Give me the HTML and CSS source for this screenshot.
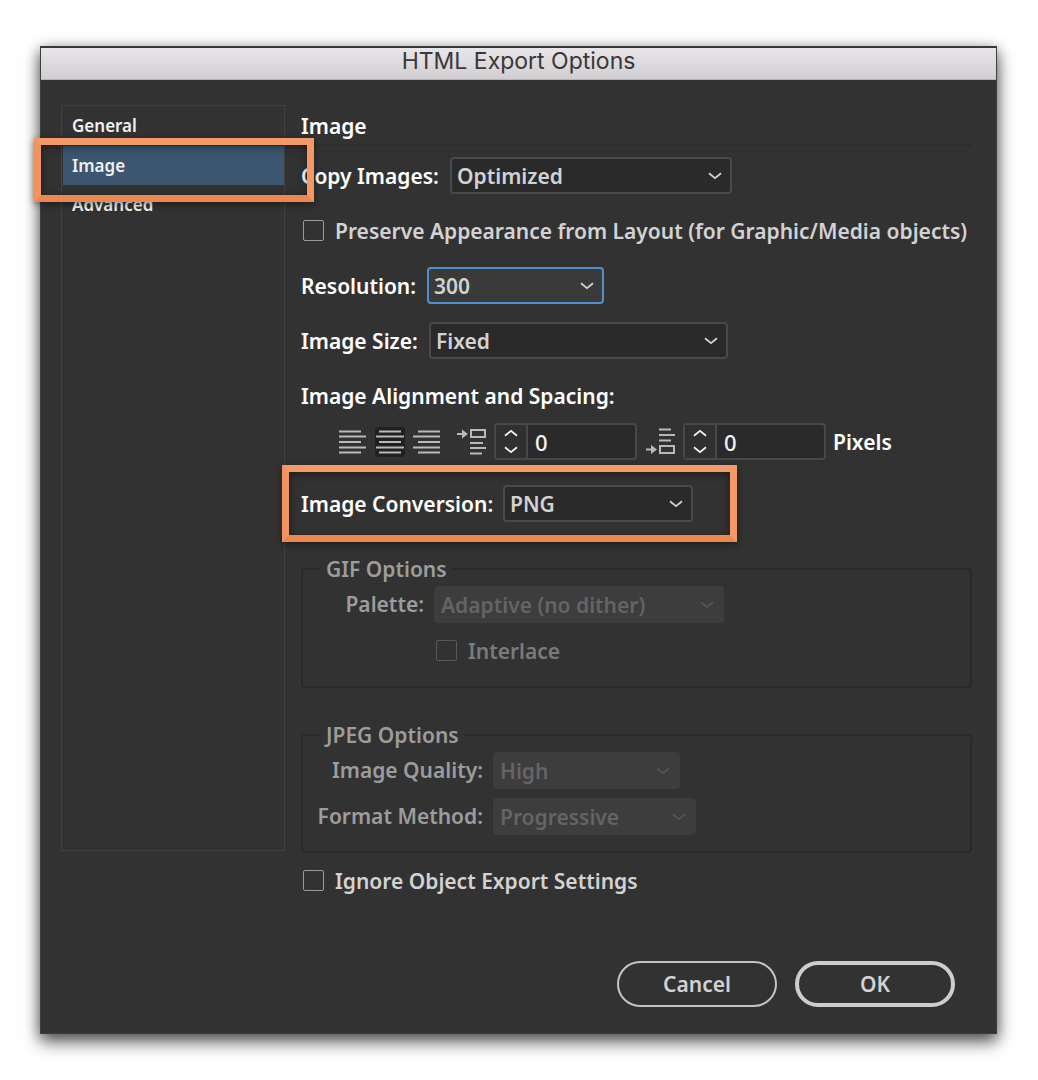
FILE: index.html
```html
<!DOCTYPE html>
<html lang="en">
<head>
<meta charset="utf-8">
<title>HTML Export Options</title>
<link rel="stylesheet" href="styles.css">
</head>
<body>
<svg class="defs" aria-hidden="true">
  <symbol id="chevron" viewBox="0 0 14 8"><path d="M1 1.2 7 6.2 13 1.2" fill="none" stroke="currentColor" stroke-width="1.8"/></symbol>
</svg>
<main class="dialog">
  <header class="titlebar"><h1 class="title">HTML Export Options</h1></header>
  <form class="content">
    <div class="panels">
      <nav class="sidebar">
        <button type="button" class="tab">General</button>
        <button type="button" class="tab tab-active">Image<span class="callout callout-tab"></span></button>
        <button type="button" class="tab">Advanced</button>
      </nav>
      <section class="settings">
        <h2 class="heading">Image</h2>
        <div class="row">
          <label class="label label-copy" for="copy">Copy Images:</label>
          <span class="dropdown w-copy"><select id="copy"><option>Optimized</option></select><svg class="chevron"><use href="#chevron"/></svg></span>
        </div>
        <div class="row check-row">
          <input type="checkbox" id="preserve"><label for="preserve">Preserve Appearance from Layout (for Graphic/Media objects)</label>
        </div>
        <div class="row">
          <label class="label label-res" for="resolution">Resolution:</label>
          <span class="dropdown w-res focused"><select id="resolution"><option>300</option></select><svg class="chevron"><use href="#chevron"/></svg></span>
        </div>
        <div class="row">
          <label class="label label-size" for="size">Image Size:</label>
          <span class="dropdown w-size"><select id="size"><option>Fixed</option></select><svg class="chevron"><use href="#chevron"/></svg></span>
        </div>
        <div class="row label">Image Alignment and Spacing:</div>
        <div class="row align-row">
          <div class="align-group">
            <button type="button" class="align" aria-label="Align left"><svg width="28" height="24"><path d="M0 1.5H22M0 6.5H27M0 12H22M0 17.500H27M0 22.500H22"/></svg></button>
            <button type="button" class="align align-active" aria-label="Align center"><svg width="28" height="24"><path d="M3 1.5H25M0 6.5H28M3 12H25M0 17.500H28M3 22.500H25"/></svg></button>
            <button type="button" class="align" aria-label="Align right"><svg width="28" height="24"><path d="M5 1.5H27M0 6.5H27M5 12H27M0 17.500H27M5 22.500H27"/></svg></button>
          </div>
          <svg class="space-icon" width="30" height="27"><path d="M0 6H8M14 2H28V9H14ZM13 15H26M13 20H29M13 25.500H25"/><path class="solid" d="M5 1.500 11 6 5 10.500Z"/></svg>
          <div class="stepper">
            <div class="arrows">
              <button type="button" aria-label="Increase space before"><svg class="flip"><use href="#chevron"/></svg></button>
              <button type="button" aria-label="Decrease space before"><svg><use href="#chevron"/></svg></button>
            </div>
            <input type="text" value="0" aria-label="Space before">
          </div>
          <svg class="space-icon" width="30" height="27"><path d="M13 1.500H25M13 7H29M13 12.500H25M14 18H28V25H14ZM0 21.500H8"/><path class="solid" d="M5 17 11 21.500 5 26Z"/></svg>
          <div class="stepper">
            <div class="arrows">
              <button type="button" aria-label="Increase space after"><svg class="flip"><use href="#chevron"/></svg></button>
              <button type="button" aria-label="Decrease space after"><svg><use href="#chevron"/></svg></button>
            </div>
            <input type="text" value="0" aria-label="Space after">
          </div>
          <span class="label units">Pixels</span>
        </div>
        <div class="row conversion">
          <label class="label label-conv" for="conversion">Image Conversion:</label>
          <span class="dropdown w-conv"><select id="conversion"><option>PNG</option></select><svg class="chevron"><use href="#chevron"/></svg></span>
          <span class="callout callout-conversion"></span>
        </div>
        <fieldset class="group gif" disabled>
          <legend>GIF Options</legend>
          <div class="group-grid">
            <label for="palette">Palette:</label>
            <span class="dropdown w-palette"><select id="palette"><option>Adaptive (no dither)</option></select><svg class="chevron"><use href="#chevron"/></svg></span>
            <div class="check-row interlace"><input type="checkbox" id="interlace"><label for="interlace">Interlace</label></div>
          </div>
        </fieldset>
        <fieldset class="group jpeg" disabled>
          <legend>JPEG Options</legend>
          <div class="group-grid">
            <label for="quality">Image Quality:</label>
            <span class="dropdown w-quality"><select id="quality"><option>High</option></select><svg class="chevron"><use href="#chevron"/></svg></span>
            <label for="method">Format Method:</label>
            <span class="dropdown w-method"><select id="method"><option>Progressive</option></select><svg class="chevron"><use href="#chevron"/></svg></span>
          </div>
        </fieldset>
        <div class="row check-row ignore">
          <input type="checkbox" id="ignore"><label for="ignore">Ignore Object Export Settings</label>
        </div>
      </section>
    </div>
    <footer class="actions">
      <button type="button" class="pill">Cancel</button>
      <button type="submit" class="pill pill-primary">OK</button>
    </footer>
  </form>
</main>
</body>
</html>
```
FILE: styles.css
```css
*, *::before, *::after { box-sizing: border-box; }

body {
  margin: 0;
  padding: 46px 41px 46px 40px;
  background: #fff;
  color: #d2d2d2;
  font: 600 21px/28px "Noto Sans", "Open Sans", sans-serif;
}

button, input, select { font: inherit; color: inherit; margin: 0; }
h1, h2 { margin: 0; font-weight: inherit; }
.defs { position: absolute; width: 0; height: 0; }

.dialog {
  background: #323232;
  border: 1px solid #3e3e41;
  border-top: 2px solid #3a393d;
  box-shadow: 0 8px 16px rgba(0, 0, 0, .6), 0 2px 12px rgba(0, 0, 0, .3);
}

.titlebar {
  height: 32px;
  background: linear-gradient(#e8e6e8, #d0ced0);
  border-bottom: 1px solid #b4b4b4;
  color: #39373a;
  text-align: center;
}
.title { font: 400 23px/27px Inter, Roboto, sans-serif; }

.content { padding: 25px 24px 26px 20px; }
.panels { display: flex; gap: 16px; }

.sidebar {
  flex: 0 0 224px;
  height: 746px;
  display: flex;
  flex-direction: column;
  border: 1px solid #414141;
}
.tab {
  position: relative;
  height: 39px;
  padding: 0 10px;
  border: 0;
  background: none;
  color: #f0f0f0;
  font-size: 17px;
  text-align: left;
}
.tab-active { margin: 1px 0 0 1px; padding-left: 9px; background: #3b566e; z-index: 1; }

.callout {
  position: absolute;
  border: 7px solid;
  border-color: #f49a68 #f49865 #ea8850 #f1935f;
  box-shadow: 0 2px 7px rgba(0, 0, 0, .45), inset 0 2px 8px rgba(0, 0, 0, .45);
  pointer-events: none;
}
.callout-tab { inset: -8px -30px -17px -29px; }
.callout-conversion { inset: -20px 235px -20px -19px; }

.settings { flex: 1; min-width: 0; }
.heading {
  height: 41px;
  padding-top: 7px;
  border-bottom: 2px solid #2d2d2d;
  color: #fff;
  font-size: 21px;
}
.row { display: flex; align-items: center; height: 37px; margin-top: 18px; }
.heading + .row { margin-top: 11px; }
.label { color: #fff; white-space: nowrap; }
.label-copy { width: 149px; }
.label-res { width: 126px; }
.label-size { width: 128px; }
.label-conv { width: 202px; }

.dropdown { display: grid; align-items: center; height: 37px; }
.dropdown select {
  grid-area: 1 / 1;
  width: 100%;
  height: 100%;
  padding: 0 5px;
  appearance: none;
  border: 2px solid #4a4a4a;
  border-radius: 4px;
  background: #2a2a2a;
  outline: 0;
}
.chevron {
  grid-area: 1 / 1;
  justify-self: end;
  width: 14px;
  height: 8px;
  margin-right: 10px;
  pointer-events: none;
}
.focused select { border-color: #4f91cf; background: #3a3a3a; }
.w-copy { width: 282px; }
.w-res { width: 177px; }
.w-size { width: 299px; }
.w-conv { width: 190px; }
.w-palette { width: 290px; }
.w-quality { width: 187px; }
.w-method { width: 203px; }

.check-row label { white-space: nowrap; }
.check-row input {
  appearance: none;
  flex: none;
  width: 21px;
  height: 21px;
  margin: 0 11px 0 2px;
  border: 1px solid #9a9a9a;
  border-radius: 2px;
}

.align-row { margin-top: 9px; padding-left: 37px; }
.align-group { display: flex; gap: 7px; margin-right: 6px; }
.align {
  display: grid;
  place-items: center;
  width: 30px;
  height: 30px;
  padding: 0;
  border: 0;
  border-radius: 4px;
  background: none;
}
.align svg, .space-icon { fill: none; stroke: #b9b9b9; stroke-width: 2; }
.align-active { background: #202020; }
.space-icon { margin: 0 7px 0 9px; flex: none; }
.space-icon .solid { fill: #b9b9b9; stroke: none; }
.stepper {
  display: flex;
  width: 143px;
  height: 37px;
  border: 2px solid #484848;
  border-radius: 4px;
  background: #2a2a2a;
  color: #f2f2f2;
}
.arrows { width: 32px; display: grid; border-right: 2px solid #484848; background: #303030; }
.arrows button { display: grid; place-items: center; padding: 0; border: 0; background: none; }
.arrows svg { width: 14px; height: 8px; }
.flip { transform: rotate(180deg); }
.stepper input { flex: 1; min-width: 0; padding: 0 7px; border: 0; background: none; outline: 0; font-size: 22px; font-weight: 500; }
.units { margin-left: 7px; }

.conversion { position: relative; margin-top: 25px; }

.group {
  min-width: 0;
  margin: 33px 0 0;
  padding: 3px 0 0;
  border: 2px solid #292929;
  border-radius: 4px;
  color: #9c9c9c;
}
.group legend { margin-left: 17px; padding: 0 6px; }
.gif { height: 133px; }
.jpeg { height: 132px; }
.group-grid { display: grid; grid-template-columns: 121px auto; gap: 9px 10px; }
.jpeg .group-grid { grid-template-columns: 180px auto; }
.group-grid > label { text-align: right; line-height: 37px; white-space: nowrap; }
.group .dropdown select { border-color: #3d3d3d; background: #3d3d3d; color: #646464; opacity: 1; }
.group .chevron { color: #555; }
.interlace { grid-column: 2; display: flex; align-items: center; height: 37px; color: #7a7a7a; }
.interlace input { border-color: #595959; }
.ignore { margin-top: 9px; }

.actions { display: flex; justify-content: flex-end; gap: 18px; margin-top: 62px; padding-right: 17px; }
.pill {
  width: 160px;
  height: 46px;
  padding: 0;
  border: 2px solid #c4c4c4;
  border-radius: 23px;
  background: none;
}
.pill-primary { border-width: 4px; border-color: #cdcdcd; }
```
